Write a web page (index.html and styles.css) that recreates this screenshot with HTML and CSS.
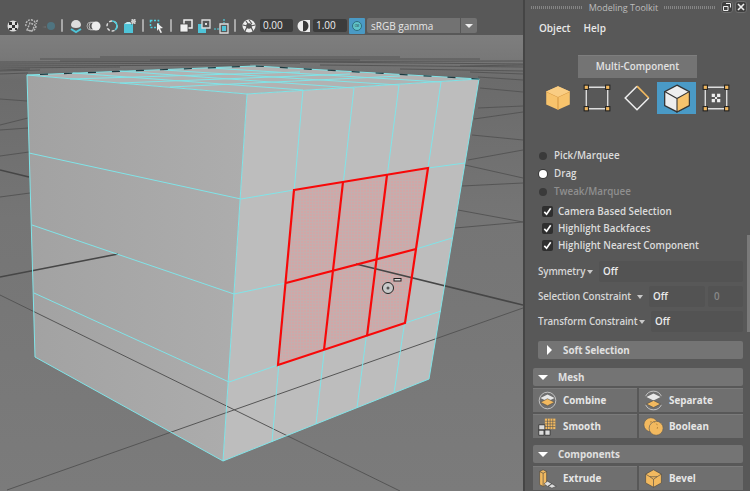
FILE: index.html
```html
<!DOCTYPE html>
<html lang="en">
<head>
<meta charset="utf-8">
<title>Modeling Toolkit</title>
<link rel="stylesheet" href="styles.css">
</head>
<body>
<div class="app">
  <main class="stage">
    <div class="toolbar">
      <svg class="tool" viewBox="0 0 18 18"><circle cx="9" cy="9" r="5.500" fill="#ddd"/><path d="M5 5h3v3H5zM11 5h2v3h-2zM8 8h3v3H8zM5 11h3v2H5zM11 11h2v2h-2z" fill="#333"/></svg>
      <svg class="tool" viewBox="0 0 18 18"><path d="M4 9a5 5 0 0 1 9-4l2-1-1 3M14 9a5 5 0 0 1-8 4M5 13l3-7 5 2-3 6z" fill="none" stroke="#bbb" stroke-width="1.400" stroke-dasharray="2 1"/></svg>
      <svg class="tool" viewBox="0 0 18 18"><circle cx="11" cy="9" r="4" fill="#4f7480"/><path d="M2 10l4-1v2z" fill="#6a6a6a"/></svg>
      <span class="sep"></span>
      <svg class="tool" viewBox="0 0 18 18"><path d="M4 8a5 5 0 0 1 10 0c0 2-2 3-5 3s-5-1-5-3z" fill="#ddd"/><path d="M4 12l5 3 5-3" fill="none" stroke="#4fc4d8" stroke-width="2"/></svg>
      <svg class="tool" viewBox="0 0 18 18"><circle cx="6" cy="9" r="4" fill="none" stroke="#aaa"/><circle cx="8" cy="9" r="4" fill="none" stroke="#bbb"/><circle cx="11" cy="9" r="4.500" fill="#eee"/></svg>
      <svg class="tool" viewBox="0 0 18 18"><circle cx="9" cy="9" r="5" fill="none" stroke="#ddd" stroke-width="1.500" stroke-dasharray="3 2"/><path d="M9 4a5 5 0 0 1 5 5 5 5 0 0 1-2 4" fill="none" stroke="#4fd0e0" stroke-width="1.500"/></svg>
      <svg class="tool" viewBox="0 0 18 18"><path d="M3 7h9v9H3z" fill="#4fc4d8"/><path d="M3 7l3-2h8l-2 2z" fill="#bfe8ef"/><path d="M10 2h5v5h-5z" fill="#ccc" stroke="#555" stroke-dasharray="1 1"/></svg>
      <span class="sep"></span>
      <svg class="tool" viewBox="0 0 18 18"><path d="M2.500 3.500h8v7h-8z" fill="none" stroke="#4fd0e0" stroke-width="1.500" stroke-dasharray="2 1.500"/><path d="M9 6l6 5-3 .5 2 4-1.500.5-2-4L9 14z" fill="#eee"/></svg>
      <span class="sep sep-wide"></span>
      <svg class="tool" viewBox="0 0 18 18"><path d="M7 3h8v8H7z" fill="none" stroke="#eee" stroke-width="1.500"/><path d="M3 7h8v8H3z" fill="#eee" stroke="#444" stroke-width=".8"/></svg>
      <svg class="tool" viewBox="0 0 18 18"><path d="M3 7h8v9H3z" fill="#4fc4d8"/><path d="M7 3h8v8H7z" fill="#555" stroke="#ddd" stroke-width="1.300"/><path d="M10 6h2v2h-2z" fill="#ddd"/></svg>
      <svg class="tool" viewBox="0 0 18 18"><path d="M7 7h8v9H7z" fill="none" stroke="#ddd" stroke-width="1.300"/><path d="M9 9h4v5H9z" fill="#4fc4d8"/><path d="M1 12h5M11 2v4" stroke="#4fd0e0" stroke-width="1.200" stroke-dasharray="2 1"/></svg>
      <span class="sep"></span>
      <svg class="tool" viewBox="0 0 18 18"><circle cx="9" cy="9" r="6.500" fill="#eee"/><circle cx="9" cy="9" r="2.800" fill="#565656"/><path d="M9 3l3 4M15 8l-4 1M13 14l-2-4M5 14l2-4M3 8l4 1M6 4l2 3" stroke="#565656" stroke-width="1.200"/></svg>
      <span class="num">0.00</span>
      <svg class="tool tool-contrast" viewBox="0 0 18 18"><path d="M8 3h7v12H8z" fill="#eee"/><circle cx="8" cy="9" r="5.500" fill="#eee"/><path d="M8 3.500a5.500 5.500 0 0 1 0 11z" fill="#3a3a3a"/></svg>
      <span class="num num-wide">1.00</span>
      <span class="cm"><span class="cm-dot">CM</span></span>
      <span class="combo"><span class="combo-text">sRGB gamma</span><span class="combo-arrow"></span></span>
    </div>
    <svg class="scene" viewBox="0 35 523 456" preserveAspectRatio="none">
      <defs>
        <linearGradient id="ground" x1="0" y1="0" x2="0" y2="1">
          <stop offset="0" stop-color="#7e7e7e"/><stop offset=".05" stop-color="#787878"/><stop offset=".1" stop-color="#6b6b6b"/><stop offset=".4" stop-color="#757575"/><stop offset="1" stop-color="#7b7b7b"/>
        </linearGradient>
        <linearGradient id="leftFace" x1="0" y1="0" x2="1" y2="0">
          <stop offset="0" stop-color="#a2a2a2"/><stop offset="1" stop-color="#adadad"/>
        </linearGradient>
        <pattern id="dither" width="3" height="3" patternUnits="userSpaceOnUse">
          <rect width="3" height="3" fill="#d2a6a6"/><rect width="1" height="3" fill="#c4aeae"/><rect width="3" height="1" fill="#c4aeae"/>
        </pattern>
      </defs>
      <rect x="0" y="35" width="523" height="456" fill="url(#ground)"/>
      <g class="grid-far">
        <path d="M40 59L480 59M100 57L400 57M0 62L523 61M0 64L300 63M300 62L523 64M0 66L250 65M320 65L523 67M0 68L120 67M400 69L523 71M0 71L40 70M470 72L523 74M0 74L28 73M478 77L523 80M150 60L360 60M60 61L230 61M460 66L523 65M0 70L30 69"/>
        <path d="M0 99L27 101M0 125L28 118M0 130L28 128M0 156L29 152M0 197L30 193M480 88L523 92M478 108L523 106M474 119L523 112M472 135L523 140M468 160L523 150M465 165L523 178M462 186L523 183M458 210L523 222M455 228L523 222"/>
      </g>
      <path class="axis" d="M0 170L29 177"/>
      <polygon points="27,75 255,66 479,79 247,94" fill="#b2b2b2"/>
      <polygon points="27,75 247,94 223,461 35,357" fill="url(#leftFace)"/>
      <polygon points="247,94 479,79 429,379 223,461" fill="#bdbdbd"/>
      <polygon class="sel" points="294,190 428,168 405,323 278,365"/>
      <path class="axis" d="M356 264L523 305M0 277L118 254"/>
      <path class="grid-near" d="M0 295L400 491M7 490L523 308"/>
      <g class="wire">
        <path d="M27 75L35 357L223 461L429 379L479 79L255 66L27 75"/>
        <path d="M247 94L223 461M27 75L247 94L479 79"/>
        <path d="M29 153L241 199L294 190M428 168L465 163M32 225L234 294L286 283M416 249L452 238M34 293L229 382L278 365M405 323L441 311"/>
        <path d="M303 90L272 442M354 88L316 424M399 85L357 408M441 82L394 393"/>
        <path d="M73 73L303 90M119 71L354 88M164 70L399 85M210 68L441 82M70 79L300 72M120 83L350 74M170 87L400 76"/>
      </g>
      <path class="edge-dash" d="M40 74.500L255 66L479 79"/>
      <g class="red">
        <path d="M294 190L428 168L405 323L278 365Z"/>
        <path d="M286 283L416 249M343 182L324 350M387 175L367 336"/>
      </g>
      <circle class="cursor-ring" cx="388" cy="288" r="5.500"/>
      <circle class="cursor-core" cx="388" cy="288" r="1.500"/>
      <rect class="cursor-tag" x="394" y="278.500" width="7" height="2.500"/>
    </svg>
  </main>
  <aside class="panel">
    <header class="title">
      <span class="grip"></span><span class="title-text">Modeling Toolkit</span><span class="grip grip-right"></span>
      <span class="win-btn"><svg viewBox="0 0 10 10"><path d="M4 1.500h4.500v4M1.500 4.500h4.500v4h-4.500z" fill="none" stroke="#eee"/></svg></span>
      <span class="win-btn"><svg viewBox="0 0 10 10"><path d="M2 2l6 6M8 2l-6 6" stroke="#eee" stroke-width="1.600"/></svg></span>
    </header>
    <nav class="menu"><span>Object</span><span>Help</span></nav>
    <div class="multi">Multi-Component</div>
    <div class="modes">
      <span class="mode"><svg viewBox="0 0 28 28"><path d="M14 3l11 5v12l-11 5-11-5V8z" fill="#f7c36c"/><path d="M3 8l11 5 11-5M14 13v12" fill="none" stroke="#d79a45"/><path d="M14 3l11 5-11 5-11-5z" fill="#f9cd83"/></svg></span>
      <span class="mode"><svg viewBox="0 0 28 28"><path d="M4 4h20v20H4z" fill="none" stroke="#ddd" stroke-width="1.300"/><g fill="#f0b75f" stroke="#222"><rect x="2" y="2" width="4" height="4"/><rect x="22" y="2" width="4" height="4"/><rect x="2" y="22" width="4" height="4"/><rect x="22" y="22" width="4" height="4"/></g></svg></span>
      <span class="mode"><svg viewBox="0 0 28 28"><path d="M14 3L3 14l11 11 11-11" fill="none" stroke="#eee" stroke-width="1.400"/><path d="M14 3l11 11" stroke="#f2b95f" stroke-width="1.600"/></svg></span>
      <span class="mode mode-on"><svg viewBox="0 0 28 28"><path d="M14 2l11.500 6v13L14 27 2.500 21V8z" fill="#eee" stroke="#333" stroke-width="1.200"/><path d="M14 14.500l11.500-6.500v13L14 27z" fill="#f7c36c" stroke="#333" stroke-width="1"/><path d="M2.500 8L14 14.500" stroke="#333" stroke-width="1"/></svg></span>
      <span class="mode"><svg viewBox="0 0 28 28"><path d="M4 4h20v20H4z" fill="none" stroke="#ddd" stroke-width="1.300"/><path d="M10 10h3v3h-3zM15 10h3v3h-3zM10 15h3v3h-3zM15 15h3v3h-3z" fill="#eee"/><path d="M13 13h2v2h-2z" fill="#eee"/><g fill="#f0b75f" stroke="#222"><rect x="2" y="2" width="4" height="4"/><rect x="22" y="2" width="4" height="4"/><rect x="2" y="22" width="4" height="4"/><rect x="22" y="22" width="4" height="4"/></g></svg></span>
    </div>
    <ul class="radios">
      <li class="radio"><span class="dot"></span>Pick/Marquee</li>
      <li class="radio"><span class="dot dot-on"></span>Drag</li>
      <li class="radio radio-off"><span class="dot"></span>Tweak/Marquee</li>
    </ul>
    <ul class="checks">
      <li class="check"><span class="box"><svg viewBox="0 0 12 12"><path d="M2.500 6.500l2.500 2.500 4.500-6.500" fill="none" stroke="#fff" stroke-width="1.800"/></svg></span>Camera Based Selection</li>
      <li class="check"><span class="box"><svg viewBox="0 0 12 12"><path d="M2.500 6.500l2.500 2.500 4.500-6.500" fill="none" stroke="#fff" stroke-width="1.800"/></svg></span>Highlight Backfaces</li>
      <li class="check"><span class="box"><svg viewBox="0 0 12 12"><path d="M2.500 6.500l2.500 2.500 4.500-6.500" fill="none" stroke="#fff" stroke-width="1.800"/></svg></span>Highlight Nearest Component</li>
    </ul>
    <div class="option option-first"><span class="option-label sym">Symmetry</span><i class="down"></i><span class="field">Off</span></div>
    <div class="option"><span class="option-label">Selection Constraint</span><i class="down"></i><span class="field">Off</span><span class="field field-dim">0</span></div>
    <div class="option"><span class="option-label trans">Transform Constraint</span><i class="down"></i><span class="field">Off</span></div>
    <div class="bar bar-soft"><i class="tri-right"></i>Soft Selection</div>
    <div class="bar bar-mesh"><i class="tri-down"></i>Mesh</div>
    <div class="tools">
      <span class="btn"><svg viewBox="0 0 24 24"><circle cx="12" cy="12" r="9.500" fill="none" stroke="#ccc"/><path d="M12 5l8 4-8 4-8-4z" fill="#e8e8e8"/><path d="M12 10l8 4-8 4-8-4z" fill="#f2b95f" stroke="#444" stroke-width=".6"/></svg>Combine</span>
      <span class="btn"><svg viewBox="0 0 24 24"><path d="M3 7a10 10 0 0 1 18 0M3 17a10 10 0 0 0 18 0" fill="none" stroke="#ccc"/><path d="M12 4l8 4-8 4-8-4z" fill="#e8e8e8"/><path d="M12 12l8 4-8 4-8-4z" fill="#f2b95f" stroke="#444" stroke-width=".6"/></svg>Separate</span>
      <span class="btn"><svg viewBox="0 0 24 24"><path d="M9 3h12v12H9z" fill="#f2b95f"/><path d="M12 3v12M15 3v12M18 3v12M9 6h12M9 9h12M9 12h12" stroke="#555" stroke-width=".7"/><path d="M2 10h7v6H2zM2 16h6v6H2zM9 16h6v6H9z" fill="#ddd" stroke="#333"/></svg>Smooth</span>
      <span class="btn"><svg viewBox="0 0 24 24"><circle cx="9" cy="10" r="8" fill="#f2b95f" stroke="#555" stroke-width=".7"/><circle cx="15" cy="14" r="8" fill="#f2b95f" stroke="#555" stroke-width=".7"/><path d="M8 7a6 6 0 0 1 8 8" fill="none" stroke="#a87a33" stroke-dasharray="2 2"/></svg>Boolean</span>
    </div>
    <div class="bar bar-comp"><i class="tri-down"></i>Components</div>
    <div class="tools tools-last">
      <span class="btn"><svg viewBox="0 0 24 24"><path d="M3 4l4-2 4 2v15l-4 2-4-2z" fill="#f2b95f" stroke="#444" stroke-width=".7"/><path d="M7 6v15M3 4l4 2 4-2" fill="none" stroke="#444" stroke-width=".7"/><path d="M12 15l5 3-5 3-4-3zM17 18l5 3-5 2-4-2z" fill="#ddd" stroke="#333" stroke-width=".6"/></svg>Extrude</span>
      <span class="btn"><svg viewBox="0 0 24 24"><path d="M12 2l9 5v10l-9 5-9-5V7z" fill="#f2b95f" stroke="#444" stroke-width=".7"/><path d="M3 7l5 3h8l5-3M8 10l4 3v9M16 10l-4 3" fill="none" stroke="#444" stroke-width=".7"/></svg>Bevel</span>
    </div>
    <span class="scroll"></span>
  </aside>
</div>
</body>
</html>
```
FILE: styles.css
```css
* { box-sizing: border-box; }
html, body { margin: 0; padding: 0; height: 100%; overflow: hidden; }
body { font-family: "Open Sans", "Noto Sans", sans-serif; font-size: 9.8px; color: #e2e2e2; background: #585858; }
ul { list-style: none; margin: 0; padding: 0; }
.app { display: flex; width: 750px; height: 491px; }

.stage { width: 523px; flex: none; display: flex; flex-direction: column; }
.toolbar { height: 35px; flex: none; background: #585858; display: flex; align-items: center; padding: 17px 0 1px 4px; }
.tool { width: 18px; height: 18px; flex: none; }
.tool-contrast { margin-left: 2px; }
.sep { width: 2px; height: 13px; background: #a8a8a8; margin: 0 4px 0 3px; flex: none; border-radius: 1px; }
.sep-wide { margin: 0 5px 0 4px; }
.num { width: 33px; height: 13px; margin-left: 2px; background: #3c3c3c; border-radius: 2px; color: #eee; font-size: 10px; line-height: 13px; padding-left: 3px; flex: none; }
.num-wide { width: 34px; margin-left: 0; }
.cm { width: 16px; height: 16px; margin-left: 2px; background: #4a9ac5; display: flex; align-items: center; justify-content: center; flex: none; border-radius: 1px; }
.cm-dot { width: 10px; height: 10px; border-radius: 50%; background: #5fc3c8; border: 1px solid #2d6d80; font-size: 3px; line-height: 8px; text-align: center; color: #234; }
.combo { width: 110px; height: 15px; margin-left: 2px; background: #727272; border-radius: 2px; display: flex; align-items: center; justify-content: space-between; flex: none; }
.combo-text { padding-left: 4px; color: #e6e6e6; font-size: 10px; }
.combo-arrow { width: 17px; height: 15px; border-left: 1px solid #585858; flex: none; display: flex; align-items: center; justify-content: center; }
.combo-arrow::before { content: ""; border: 4px solid transparent; border-top: 4px solid #eee; border-bottom: 0; }
.scene { flex: 1; width: 523px; display: block; }

.grid-far path { fill: none; stroke: #555; stroke-width: 1; }
.axis { fill: none; stroke: #464646; stroke-width: 1.600; }
.grid-near { fill: none; stroke: #555; stroke-width: 1; }
.wire path { fill: none; stroke: #80e4e8; stroke-width: 1; }
.edge-dash { fill: none; stroke: #1d3a40; stroke-width: 1.200; stroke-dasharray: 8 16; }
.sel { fill: url(#dither); }
.red path { fill: none; stroke: #f80808; stroke-width: 2.200; }
.cursor-ring { fill: #c8c8c8; stroke: #222; stroke-width: 1; }
.cursor-core { fill: #555; }
.cursor-tag { fill: #ddd; stroke: #222; stroke-width: 1; }

.panel { width: 227px; flex: none; height: 491px; background: #585858; border-left: 2px solid #454545; position: relative; overflow: hidden; padding-left: 8px; }
.title { height: 14px; margin-left: -2px; display: flex; align-items: center; color: #bcbcbc; font-size: 9px; }
.grip { width: 52px; height: 3px; background: repeating-linear-gradient(90deg, #858585 0 1px, transparent 1px 2px); flex: none; }
.title-text { width: 81px; text-align: center; flex: none; white-space: nowrap; }
.grip-right { margin-right: 5px; }
.win-btn { width: 12px; height: 12px; background: #404040; border: 1px solid #6e6e6e; border-radius: 3px; margin-right: 2px; flex: none; display: flex; }
.win-btn svg { width: 10px; height: 10px; }
.menu { display: flex; gap: 13px; margin: 7px 0 0 6px; height: 14px; line-height: 14px; font-weight: 600; color: #e8e8e8; font-size: 10px; }
.multi { width: 119px; height: 23px; margin: 20px 0 0 45px; background: #747474; text-align: center; line-height: 22px; font-weight: 600; border-top: 1px solid #7e7e7e; }
.modes { display: grid; grid-template-columns: repeat(5, 39.600px); margin: 4px 0 0 5px; height: 32px; }
.mode { display: flex; align-items: center; justify-content: center; }
.mode svg { width: 30px; height: 30px; }
.mode-on { background: #4a9ac6; }

.radios { margin: 33px 0 0 5px; }
.radio { height: 18px; display: flex; align-items: center; gap: 7px; padding: 0 0 1px 1px; font-weight: 600; color: #dcdcdc; }
.radio-off { color: #8f8f8f; }
.dot { width: 8px; height: 8px; border-radius: 50%; background: #3a3a3a; flex: none; }
.dot-on { background: #fff; box-shadow: 0 0 0 1px #3a3a3a; }
.checks { margin: 2px 0 0 5px; }
.check { height: 17px; display: flex; align-items: center; gap: 5px; font-weight: 600; color: #dcdcdc; padding-left: 4px; }
.box { width: 11px; height: 11px; background: #2f2f2f; border-radius: 2px; flex: none; }
.box svg { width: 11px; height: 11px; display: block; }

.option { display: flex; align-items: center; height: 21px; margin: 4px 0 0 5px; padding-right: 7px; font-weight: 600; color: #d6d6d6; }
.option-first { margin-top: 7px; }
.option-label { white-space: nowrap; width: 99px; flex: none; letter-spacing: -.12px; }
.sym { width: 49px; }
.trans { width: 101px; }
.down { width: 0; height: 0; border: 3.500px solid transparent; border-top: 4px solid #c8c8c8; border-bottom: 0; margin: 0 6px 0 0; flex: none; }
.field { flex: 1; height: 21px; background: #535353; line-height: 21px; padding-left: 4px; color: #ececec; border-radius: 2px; }
.field-dim { flex: none; width: 35px; margin-left: 3px; padding-left: 6px; color: #888; }
.bar { height: 18px; background: #747474; border-radius: 2px; display: flex; align-items: center; font-weight: 700; color: #e0e0e0; margin-right: 7px; }
.bar-soft { margin: 9px 7px 0 5px; }
.bar-mesh { margin-top: 9px; }
.bar-comp { margin-top: 7px; }
.tri-right { width: 0; height: 0; border: 5px solid transparent; border-left: 5px solid #fff; border-right: 0; margin: 0 11px 0 9px; flex: none; }
.tri-down { width: 0; height: 0; border: 5px solid transparent; border-top: 5px solid #fff; border-bottom: 0; margin: 0 10px 0 5px; flex: none; }
.tools { display: grid; grid-template-columns: 104px 104px; gap: 2px; margin-top: 2px; }
.tools-last { margin-top: 3px; }
.btn { height: 24px; background: #6f6f6f; display: flex; align-items: center; gap: 5px; padding: 0 0 1px 4px; font-weight: 700; color: #e6e6e6; border-top: 1px solid #7b7b7b; }
.btn svg { width: 21px; height: 21px; flex: none; }
.scroll { position: absolute; right: 0; top: 235px; width: 3px; height: 97px; background: #7a7a7a; }
```
